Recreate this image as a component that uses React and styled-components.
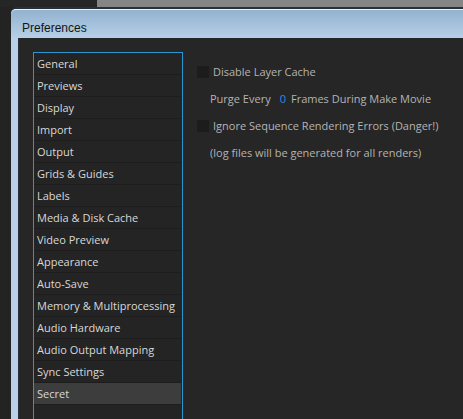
import styled, { createGlobalStyle } from "styled-components";

const GlobalStyle = createGlobalStyle`
  html, body {
    margin: 0;
    padding: 0;
    background: #232323;
    overflow: hidden;
  }
  #root {
    height: 419px;
  }
`;

const categories = [
  "General",
  "Previews",
  "Display",
  "Import",
  "Output",
  "Grids & Guides",
  "Labels",
  "Media & Disk Cache",
  "Video Preview",
  "Appearance",
  "Auto-Save",
  "Memory & Multiprocessing",
  "Audio Hardware",
  "Audio Output Mapping",
  "Sync Settings",
  "Secret",
];

export default function App() {
  return (
    <Page>
      <GlobalStyle />
      <TopStrip>
        <StripDark />
        <StripGray />
      </TopStrip>
      <Window>
        <TitleBar>Preferences</TitleBar>
        <Body>
          <CategoryList>
            {categories.map((c) => (
              <Category key={c} selected={c === "Secret"}>
                {c}
              </Category>
            ))}
          </CategoryList>
          <Settings>
            <Row>
              <Check />
              <Label>Disable Layer Cache</Label>
            </Row>
            <Row indent>
              <Label>Purge Every</Label>
              <Value>0</Value>
              <Label>Frames During Make Movie</Label>
            </Row>
            <Row>
              <Check />
              <Label>Ignore Sequence Rendering Errors (Danger!)</Label>
            </Row>
            <Row indent>
              <Label>(log files will be generated for all renders)</Label>
            </Row>
          </Settings>
        </Body>
      </Window>
    </Page>
  );
}

const Page = styled.div`
  width: 463px;
  height: 419px;
  display: flex;
  flex-direction: column;
  overflow: hidden;
  font-family: "Open Sans", "Noto Sans", sans-serif;
`;

const TopStrip = styled.div`
  display: flex;
  height: 7px;
  flex-shrink: 0;
`;

const StripDark = styled.div`
  width: 97px;
  background: #262626;
`;

const StripGray = styled.div`
  flex: 1;
  background: #858585;
`;

const Window = styled.div`
  margin-left: 11px;
  width: 480px;
  flex: 1;
  display: flex;
  flex-direction: column;
  border-top: 2px solid #27313b;
  border-top-left-radius: 6px;
  background: #b9d1e8;
  padding-left: 7px;
`;

const TitleBar = styled.div`
  height: 28px;
  margin-left: -7px;
  padding-left: 11px;
  border-top: 1px solid #e8f0f8;
  border-top-left-radius: 5px;
  background: linear-gradient(#92b2d0, #b7cfe6);
  color: #141414;
  font-family: "Liberation Sans", Arial, sans-serif;
  font-size: 12px;
  line-height: 36px;
  overflow: hidden;
`;

const Body = styled.div`
  flex: 1;
  display: flex;
  align-items: flex-start;
  background: #262626;
  border-left: 1px solid #2c3036;
  padding: 14px 0 0 14px;
`;

const CategoryList = styled.div`
  width: 148px;
  height: 400px;
  border: 1px solid #2a95cf;
  background: #242424;
  display: flex;
  flex-direction: column;
  flex-shrink: 0;
`;

const Category = styled.div`
  height: 21px;
  margin-right: 1px;
  border-bottom: 1px solid #1d1d1d;
  padding-left: 3px;
  line-height: 22px;
  font-size: 11px;
  color: #d8d8d8;
  background: ${(p) => (p.selected ? "#3d3d3d" : "transparent")};
`;

const Settings = styled.div`
  display: flex;
  flex-direction: column;
  padding: 6px 0 0 13px;
`;

const Row = styled.div`
  display: flex;
  align-items: center;
  height: 27px;
  gap: 3px;
  padding-left: ${(p) => (p.indent ? "14px" : "0")};
`;

const Check = styled.div`
  width: 14px;
  height: 14px;
  background: #1c1c1c;
  border: 1px solid #262626;
  box-sizing: border-box;
`;

const Label = styled.span`
  font-size: 11px;
  color: #b4b4b4;
  white-space: nowrap;
`;

const Value = styled.span`
  font-size: 11px;
  color: #2d8ceb;
  margin: 0 2px 0 6px;
`;
